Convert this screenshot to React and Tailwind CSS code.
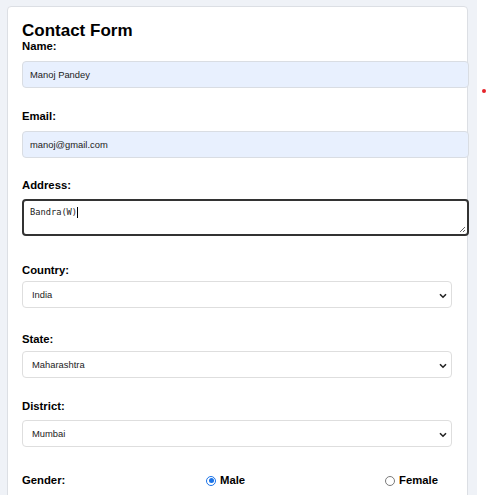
import { useState } from 'react';

const Chevron = () => (
  <svg width="8" height="6" viewBox="0 0 8 6" className="absolute right-[4px] top-[11px]">
    <path d="M1 1.2 L4 4.2 L7 1.2" fill="none" stroke="#222" strokeWidth="1.6" />
  </svg>
);

function Label({ children, className = '' }) {
  return <div className={`text-[11.3px] leading-[13px] font-bold text-black ${className}`}>{children}</div>;
}

function Field({ value }) {
  return (
    <input
      readOnly
      value={value}
      className="block w-[447px] h-[27px] bg-[#e8f0fe] border border-[#d9dde3] rounded-[4px] px-[7px] text-[9.4px] text-[#222] outline-none"
    />
  );
}

function Dropdown({ value }) {
  return (
    <div className="relative w-[430px] h-[27px] border border-[#dedede] rounded-[4px] bg-white">
      <div className="pl-[9px] leading-[25px] text-[9.4px] text-[#222]">{value}</div>
      <Chevron />
    </div>
  );
}

function Radio({ checked }) {
  return checked ? (
    <span className="inline-flex items-center justify-center w-[10px] h-[10px] rounded-full border-[1.5px] border-[#1a73e8] bg-white">
      <span className="w-[5px] h-[5px] rounded-full bg-[#1a73e8]" />
    </span>
  ) : (
    <span className="inline-block w-[10px] h-[10px] rounded-full border border-[#7a7a7a] bg-white" />
  );
}

export default function App() {
  const [gender] = useState('male');

  return (
    <div className="flex w-[488px] h-[495px] overflow-hidden bg-white" style={{ fontFamily: '"Liberation Sans", Arial, sans-serif' }}>
      <div className="w-[477px] shrink-0 bg-[#eff2f7] pl-[7px] pt-[6px]">
        <div className="w-[461px] h-[520px] bg-white border border-[#dcdfe4] rounded-[4px] px-[14px] pt-[14px]">
          <h2 className="text-[17px] leading-[19px] font-bold text-black">Contact Form</h2>

          <Label>Name:</Label>
          <div className="mt-[8px]"><Field value="Manoj Pandey" /></div>

          <Label className="mt-[22px]">Email:</Label>
          <div className="mt-[8px]"><Field value="manoj@gmail.com" /></div>

          <Label className="mt-[21px]">Address:</Label>
          <div className="relative mt-[7px] w-[447px] h-[37px] border-2 border-[#333] rounded-[4px] bg-white px-[6px] pt-[5px]">
            <div className="flex items-center h-[12px] text-[8.7px] leading-[12px] text-[#222]" style={{ fontFamily: '"DejaVu Sans Mono", monospace' }}>
              <span>Bandra(W)</span>
              <span className="w-px h-[11px] bg-black" />
            </div>
            <svg width="7" height="7" viewBox="0 0 7 7" className="absolute right-[1px] bottom-[1px]">
              <path d="M6 1 L1 6 M6 4 L4 6" stroke="#666" strokeWidth="1" />
            </svg>
          </div>

          <Label className="mt-[28px]">Country:</Label>
          <div className="mt-[4px]"><Dropdown value="India" /></div>

          <Label className="mt-[25px]">State:</Label>
          <div className="mt-[5px]"><Dropdown value="Maharashtra" /></div>

          <Label className="mt-[22px]">District:</Label>
          <div className="mt-[7px]"><Dropdown value="Mumbai" /></div>

          <div className="mt-[27px] flex items-center text-[11.3px] leading-[13px] font-bold text-black">
            <div className="w-[184px]">Gender:</div>
            <div className="w-[179px] flex items-center gap-[4px]">
              <Radio checked={gender === 'male'} />
              <span>Male</span>
            </div>
            <div className="flex items-center gap-[4px]">
              <Radio checked={gender === 'female'} />
              <span>Female</span>
            </div>
          </div>
        </div>
      </div>
      <div className="flex-1 pl-[5px] pt-[89px]">
        <div className="w-[4px] h-[4px] rounded-full bg-[#e5242a]" />
      </div>
    </div>
  );
}
